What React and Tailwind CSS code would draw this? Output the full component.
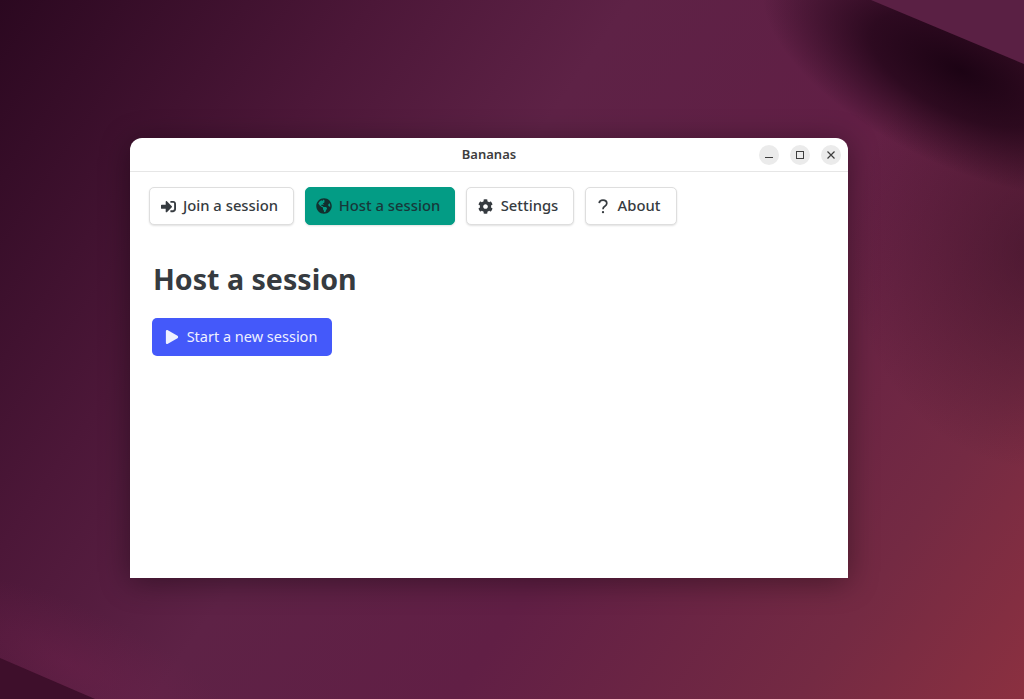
import React from 'react';
import { FaSignInAlt, FaGlobeAmericas, FaCog, FaPlay } from 'react-icons/fa';

// desktop wallpaper, drawn behind the window
const Wallpaper = () => (
    <svg className="absolute inset-0" width="1024" height="699" viewBox="0 0 1024 699">
        <defs>
            <linearGradient id="base" x1="0" y1="0" x2="1024" y2="699" gradientUnits="userSpaceOnUse">
                <stop offset="0" stopColor="#2b0820" />
                <stop offset="0.25" stopColor="#4c1738" />
                <stop offset="0.42" stopColor="#5e2246" />
                <stop offset="0.62" stopColor="#611f45" />
                <stop offset="0.85" stopColor="#742a43" />
                <stop offset="1" stopColor="#8b3040" />
            </linearGradient>
            <radialGradient id="band">
                <stop offset="0" stopColor="#1c0314" stopOpacity="1" />
                <stop offset="0.45" stopColor="#1c0314" stopOpacity="0.75" />
                <stop offset="1" stopColor="#1c0314" stopOpacity="0" />
            </radialGradient>
            <radialGradient id="side">
                <stop offset="0" stopColor="#2a0a20" stopOpacity="0.5" />
                <stop offset="1" stopColor="#2a0a20" stopOpacity="0" />
            </radialGradient>
            <radialGradient id="corner">
                <stop offset="0" stopColor="#71214c" stopOpacity="0.4" />
                <stop offset="1" stopColor="#71214c" stopOpacity="0" />
            </radialGradient>
        </defs>
        <rect width="1024" height="699" fill="url(#base)" />
        <ellipse cx="1040" cy="250" rx="190" ry="220" fill="url(#side)" />
        <ellipse cx="960" cy="70" rx="215" ry="95" transform="rotate(26 960 70)" fill="url(#band)" />
        <polygon points="871,0 1024,64 1024,0" fill="#5a2044" />
        <ellipse cx="70" cy="665" rx="180" ry="60" transform="rotate(24 70 665)" fill="url(#corner)" />
        <polygon points="0,658 95,699 0,699" fill="#3e0f2b" />
    </svg>
);

const NavButton = ({ icon, label, width, gap, active }) => (
    <button
        className={`flex h-[38px] items-center justify-center rounded-[5px] border pr-1 text-[14.8px] font-medium leading-none shadow-[0_1px_2px_rgba(0,0,0,0.12)] ${width} ${gap} ${
            active ? 'border-[#039c85] bg-[#039c85] text-[#17383a]' : 'border-[#dedede] bg-white text-[#363b40]'
        }`}
    >
        {icon}
        <span className="pb-[2px]">{label}</span>
    </button>
);

const App = () => {
    return (
        <div className="relative h-[699px] w-[1024px] overflow-hidden pl-[130px] pt-[138px] font-['Noto_Sans',sans-serif]">
            <Wallpaper />

            <div className="relative h-[440px] w-[718px] rounded-t-xl bg-white shadow-[0_4px_30px_rgba(0,0,0,0.38)]">
                {/* Title bar */}
                <div className="relative flex h-[34px] items-center justify-center border-b border-[#e6e6e6]">
                    <span className="text-[13px] font-semibold text-[#3d3d3d]">Bananas</span>
                    <div className="absolute right-[7px] top-[7px] flex gap-[11px]">
                        <div className="flex h-5 w-5 items-center justify-center rounded-full bg-[#ebebeb]">
                            <svg width="10" height="10" viewBox="0 0 10 10">
                                <path d="M1 7.5h8" stroke="#3d3d3d" strokeWidth="1" />
                            </svg>
                        </div>
                        <div className="flex h-5 w-5 items-center justify-center rounded-full bg-[#ebebeb]">
                            <svg width="10" height="10" viewBox="0 0 10 10">
                                <rect x="1.5" y="1.5" width="7" height="7" fill="none" stroke="#3d3d3d" strokeWidth="1" />
                            </svg>
                        </div>
                        <div className="flex h-5 w-5 items-center justify-center rounded-full bg-[#ebebeb]">
                            <svg width="10" height="10" viewBox="0 0 10 10">
                                <path d="M1.5 1.5l7 7M8.5 1.5l-7 7" stroke="#3d3d3d" strokeWidth="1.2" />
                            </svg>
                        </div>
                    </div>
                </div>

                {/* Tabs */}
                <div className="flex gap-[11px] pl-[19px] pt-[15px]">
                    <NavButton width="w-[145px]" gap="gap-[7px]" label="Join a session" icon={<FaSignInAlt className="text-[15px]" />} />
                    <NavButton width="w-[150px]" gap="gap-[7px]" active label="Host a session" icon={<FaGlobeAmericas className="text-[16px] text-[#12302f]" />} />
                    <NavButton width="w-[108px]" gap="gap-2" label="Settings" icon={<FaCog className="text-[15px]" />} />
                    <NavButton
                        width="w-[92px]"
                        gap="gap-[10px]"
                        label="About"
                        icon={
                            <svg width="10" height="15" viewBox="0 0 10 15">
                                <path d="M1.2 4.2C1.4 2.3 3 1.2 5 1.2c2.2 0 3.8 1.3 3.8 3.1 0 1.5-.9 2.2-2 3C5.7 8 5 8.7 5 10.2" fill="none" stroke="#363b40" strokeWidth="1.7" />
                                <circle cx="5" cy="13.2" r="1.15" fill="#363b40" />
                            </svg>
                        }
                    />
                </div>

                {/* Page content */}
                <div className="pl-[23px] pt-[34px]">
                    <h1 className="text-[28.6px] font-bold leading-[40px] text-[#363b40]">Host a session</h1>
                    <button className="ml-[-1px] mt-[19px] flex h-[38px] w-[180px] items-center justify-center gap-2 rounded-[5px] bg-[#4459fa] pr-[2px] text-[14.5px] leading-none text-[#eef0ff]">
                        <FaPlay className="text-[14px]" />
                        <span className="pb-[2px]">Start a new session</span>
                    </button>
                </div>
            </div>
        </div>
    );
};

export default App;
